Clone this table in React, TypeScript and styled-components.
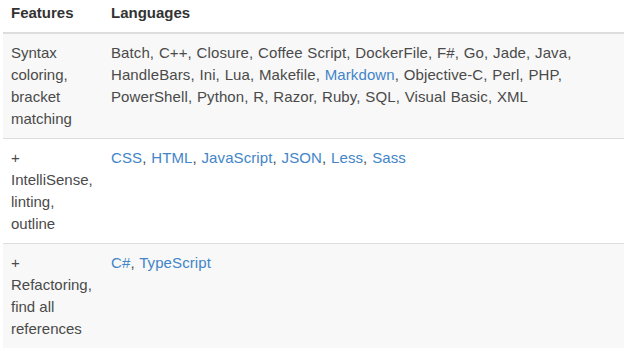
import styled, { createGlobalStyle } from "styled-components"

const GlobalStyle = createGlobalStyle`
    html, body {
        margin: 0;
        padding: 0;
        background: #fff;
        overflow: hidden;
    }
`

const Page = styled.div`
    padding-left: 3px;
    margin-top: -6px;
    font-family: "Liberation Sans", Arial, sans-serif;
    font-size: 15px;
    line-height: 22px;
    color: #4a4a4a;
`

const Table = styled.table`
    border-collapse: collapse;
    border-spacing: 0;
    width: 640px;
`

const HeadCell = styled.th`
    text-align: left;
    font-weight: 700;
    color: #333;
    padding: 8px 8px;
    vertical-align: bottom;
    border-bottom: 2px solid #ddd;
`

const Row = styled.tr<{ $striped?: boolean }>`
    background-color: ${(p) => (p.$striped ? "#f8f8f8" : "#fff")};
    border-top: 1px solid #ddd;
`

const Cell = styled.td<{ $narrow?: boolean }>`
    padding: 8px 8px;
    vertical-align: top;
    width: ${(p) => (p.$narrow ? "84px" : "auto")};
`

const LangList = styled.span`
    letter-spacing: 0.1px;
    word-spacing: 0.5px;
`

const Link = styled.a`
    color: #4285c8;
    text-decoration: none;
`

type Lang = { name: string; link?: boolean }

const plain = (names: string[]): Lang[] => names.map((name) => ({ name }))
const linked = (names: string[]): Lang[] => names.map((name) => ({ name, link: true }))

const rows: { feature: string[]; langs: Lang[] }[] = [
    {
        feature: ["Syntax", "coloring,", "bracket", "matching"],
        langs: [
            ...plain([
                "Batch", "C++", "Closure", "Coffee Script", "DockerFile", "F#", "Go", "Jade", "Java",
                "HandleBars", "Ini", "Lua", "Makefile",
            ]),
            ...linked(["Markdown"]),
            ...plain(["Objective-C", "Perl", "PHP", "PowerShell", "Python", "R", "Razor", "Ruby", "SQL", "Visual Basic", "XML"]),
        ],
    },
    {
        feature: ["+", "IntelliSense,", "linting,", "outline"],
        langs: linked(["CSS", "HTML", "JavaScript", "JSON", "Less", "Sass"]),
    },
    {
        feature: ["+", "Refactoring,", "find all", "references"],
        langs: linked(["C#", "TypeScript"]),
    },
]

const App = () => {
    return (
        <Page>
            <GlobalStyle />
            <Table>
                <thead>
                    <tr>
                        <HeadCell>Features</HeadCell>
                        <HeadCell>Languages</HeadCell>
                    </tr>
                </thead>
                <tbody>
                    {rows.map((row, i) => (
                        <Row key={i} $striped={i % 2 === 0}>
                            <Cell $narrow>
                                {row.feature.map((line, j) => (
                                    <div key={j}>{line}</div>
                                ))}
                            </Cell>
                            <Cell>
                                <LangList>
                                    {row.langs.map((lang, j) => (
                                        <span key={j}>
                                            {lang.link ? <Link href="#">{lang.name}</Link> : lang.name}
                                            {j < row.langs.length - 1 ? ", " : ""}
                                        </span>
                                    ))}
                                </LangList>
                            </Cell>
                        </Row>
                    ))}
                </tbody>
            </Table>
        </Page>
    )
}

export default App
